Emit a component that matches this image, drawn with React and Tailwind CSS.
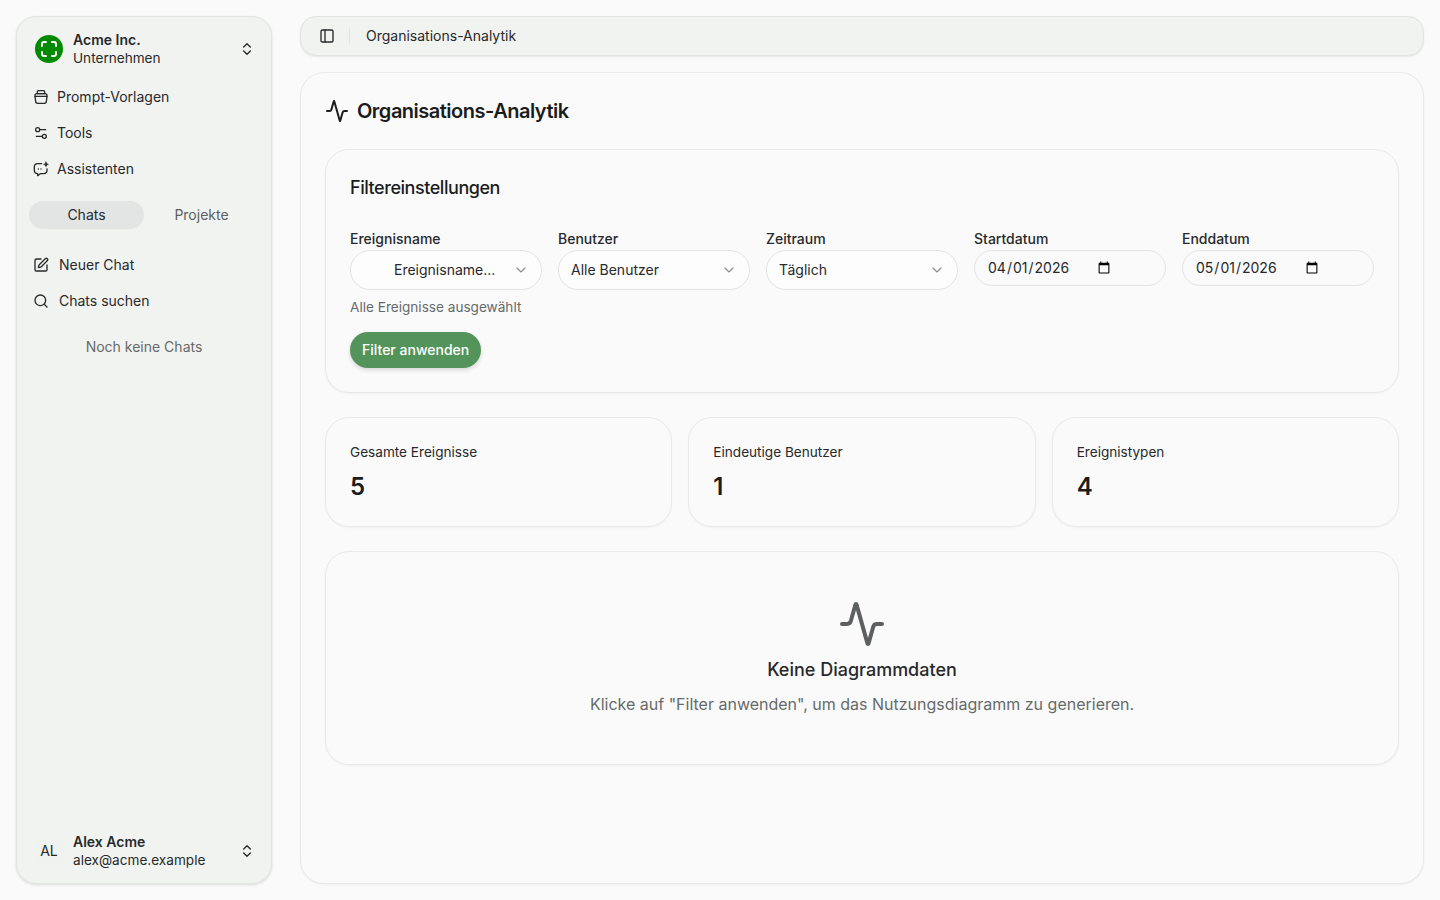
import React from "react";
import { Activity, ChevronDown, ChevronsUpDown, PanelLeft, Search, Settings2, SquarePen } from "lucide-react";

function PotIcon() {
  return (
    <svg width="16" height="16" viewBox="0 0 24 24" fill="none" stroke="currentColor" strokeWidth="2" strokeLinecap="round" strokeLinejoin="round" className="shrink-0">
      <path d="M8 2.5h8a1.5 1.5 0 0 1 1.5 1.5v3h-11V4A1.5 1.5 0 0 1 8 2.5Z" />
      <path d="M6 7h12a3 3 0 0 1 3 3v1l-1 7.5a3 3 0 0 1-3 3H7a3 3 0 0 1-3-3L3 11v-1a3 3 0 0 1 3-3Z" />
      <path d="M3 11h18" />
    </svg>
  );
}

function AssistantIcon() {
  return (
    <svg width="16" height="16" viewBox="0 0 24 24" fill="none" stroke="currentColor" strokeWidth="2" strokeLinecap="round" strokeLinejoin="round" className="shrink-0">
      <path d="M13 4H7a5 5 0 0 0-5 5v5a5 5 0 0 0 5 5v3l4-3h5a5 5 0 0 0 5-5v-2" />
      <path d="M19.5 1.5 20.6 4 23 5l-2.4 1-1.1 2.5L18.4 6 16 5l2.4-1Z" fill="currentColor" strokeWidth="1" />
      <path d="M8 12h.01M12 12h.01" />
    </svg>
  );
}

function LogoIcon() {
  return (
    <div className="flex h-7 w-7 shrink-0 items-center justify-center rounded-full bg-[#008a00]">
      <svg width="20" height="20" viewBox="0 0 20 20" fill="none" stroke="#ffffff" strokeWidth="2" strokeLinecap="round" strokeLinejoin="round">
        <path d="M3 7V5a2 2 0 0 1 2-2h2" />
        <path d="M13 3h2a2 2 0 0 1 2 2v2" />
        <path d="M17 13v2a2 2 0 0 1-2 2h-2" />
        <path d="M7 17H5a2 2 0 0 1-2-2v-2" />
      </svg>
    </div>
  );
}

function NavRow({ icon, label, gap = "gap-2" }) {
  return (
    <div className={`flex h-9 items-center ${gap} px-2 text-sm text-[#27292a]`}>
      {icon}
      <span>{label}</span>
    </div>
  );
}

function Sidebar() {
  return (
    <aside className="flex h-[868px] w-64 shrink-0 flex-col rounded-[20px] border border-[#e2e4e2] bg-[#f1f3f1] px-2 shadow-[0_1px_3px_rgba(0,0,0,0.12)]">
      <div className="flex items-center gap-2.5 pl-[10px] pr-2 pt-[14px]">
        <LogoIcon />
        <div className="min-w-0 flex-1 text-[#27292a]">
          <div className="text-sm font-semibold leading-[18px]">Acme Inc.</div>
          <div className="text-[13.6px] leading-[18px]">Unternehmen</div>
        </div>
        <ChevronsUpDown size={16} strokeWidth={2} className="text-[#27292a]" />
      </div>
      <nav className="mt-[12px] flex flex-col">
        <NavRow icon={<PotIcon />} label="Prompt-Vorlagen" />
        <NavRow icon={<Settings2 size={16} strokeWidth={2} />} label="Tools" />
        <NavRow icon={<AssistantIcon />} label="Assistenten" />
      </nav>
      <div className="mt-[14px] grid grid-cols-2 px-[4px] text-sm">
        <div className="flex h-7 items-center justify-center rounded-full bg-[#e3e5e4] text-[#27292a]">Chats</div>
        <div className="flex h-7 items-center justify-center text-[#5c6060]">Projekte</div>
      </div>
      <div className="mt-[18px] flex flex-col">
        <NavRow icon={<SquarePen size={16} strokeWidth={2} />} label="Neuer Chat" gap="gap-2.5" />
        <NavRow icon={<Search size={16} strokeWidth={2} />} label="Chats suchen" gap="gap-2.5" />
      </div>
      <div className="mt-[18px] text-center text-sm leading-5 text-[#666a6a]">Noch keine Chats</div>
      <div className="mt-auto flex items-center gap-2 px-2 pb-[14px]">
        <div className="flex h-8 w-8 shrink-0 items-center justify-center rounded-full bg-[#f0f2f0] text-sm text-[#27292a]">AL</div>
        <div className="min-w-0 flex-1 text-[#27292a]">
          <div className="text-sm font-semibold leading-[18px]">Alex Acme</div>
          <div className="text-[13.6px] leading-[18px]">alex@acme.example</div>
        </div>
        <ChevronsUpDown size={16} strokeWidth={2} className="text-[#27292a]" />
      </div>
    </aside>
  );
}

function SelectBox({ children, className = "" }) {
  return (
    <div className={`flex h-10 items-center justify-between rounded-[20px] border border-[#e2e4e2] bg-[#fdfdfd] pr-3 text-sm text-[#27292a] ${className}`}>
      {children}
      <ChevronDown size={16} strokeWidth={1.75} className="text-[#8a8d8d]" />
    </div>
  );
}

function Field({ label, children }) {
  return (
    <div className="flex flex-col">
      <label className="text-sm font-medium leading-5 text-[#27292a]">{label}</label>
      {children}
    </div>
  );
}

function DateInput({ value }) {
  return (
    <div className="mt-[1px] flex h-9 w-full items-center rounded-[18px] border border-[#e2e4e2] px-3">
      <input
        type="date"
        defaultValue={value}
        className="bg-transparent text-sm text-[#27292a] outline-none"
      />
    </div>
  );
}

function Stat({ label, value }) {
  return (
    <div className="flex h-[110px] flex-col rounded-[24px] border border-[#e8eae8] bg-[#fafafa] px-6 pt-[24px] shadow-[0_1px_2px_rgba(0,0,0,0.04)]">
      <div className="text-[13.6px] leading-5 text-[#27292a]">{label}</div>
      <div className="mt-[9px] text-2xl font-semibold leading-8 text-[#1b1d1d]">{value}</div>
    </div>
  );
}

export default function App() {
  return (
    <div className="flex h-[900px] w-[1440px] gap-7 overflow-hidden bg-[#fafafa] p-4 font-['Inter',sans-serif] antialiased">
      <Sidebar />
      <main className="flex min-w-0 flex-1 flex-col gap-4">
        <header className="flex h-10 shrink-0 items-center rounded-[16px] border border-[#e2e4e2] bg-[#f1f3f1] pl-[18px] text-sm text-[#27292a] shadow-[0_1px_2px_rgba(0,0,0,0.08)]">
          <PanelLeft size={16} strokeWidth={2} />
          <div className="ml-[14px] mr-[16px] h-4 w-px bg-[#e2e4e2]" />
          <span>Organisations-Analytik</span>
        </header>
        <section className="flex h-[812px] flex-col rounded-[24px] border border-[#e8eae8] bg-[#fafafa] px-6 pt-6 shadow-[0_1px_2px_rgba(0,0,0,0.05)]">
          <h1 className="flex h-[28px] items-center gap-2 text-xl font-semibold tracking-[-0.025em] text-[#1b1d1d]">
            <Activity size={24} strokeWidth={2} />
            Organisations-Analytik
          </h1>
          <div className="mt-6 h-[244px] rounded-[24px] border border-[#e8eae8] bg-[#fafafa] px-6 pt-6 shadow-[0_1px_2px_rgba(0,0,0,0.04)]">
            <h2 className="text-lg font-medium leading-7 tracking-[-0.025em] text-[#1b1d1d]">Filtereinstellungen</h2>
            <div className="mt-[27px] grid grid-cols-5 items-start gap-4">
              <Field label="Ereignisname">
                <SelectBox className="pl-[43px] mt-[1px]">Ereignisname...</SelectBox>
                <p className="mt-[7px] text-[13.6px] leading-5 text-[#666a6a]">Alle Ereignisse ausgewählt</p>
              </Field>
              <Field label="Benutzer">
                <SelectBox className="pl-3 mt-[1px]">Alle Benutzer</SelectBox>
              </Field>
              <Field label="Zeitraum">
                <SelectBox className="pl-3 mt-[1px]">Täglich</SelectBox>
              </Field>
              <Field label="Startdatum">
                <DateInput value="2026-04-01" />
              </Field>
              <Field label="Enddatum">
                <DateInput value="2026-05-01" />
              </Field>
            </div>
            <button className="mt-[15px] h-9 rounded-full bg-[#52945a] px-3 text-sm font-medium text-white shadow-[0_2px_4px_rgba(0,0,0,0.15)]">Filter anwenden</button>
          </div>
          <div className="mt-6 grid grid-cols-3 gap-4">
            <Stat label="Gesamte Ereignisse" value="5" />
            <Stat label="Eindeutige Benutzer" value="1" />
            <Stat label="Ereignistypen" value="4" />
          </div>
          <div className="mt-6 flex h-[214px] flex-col items-center rounded-[24px] border border-[#e8eae8] bg-[#fafafa] pt-[48px] shadow-[0_1px_2px_rgba(0,0,0,0.04)]">
            <Activity size={48} strokeWidth={2} className="text-[#5c6060]" />
            <div className="mt-[8px] text-lg font-medium leading-7 text-[#27292a]">Keine Diagrammdaten</div>
            <div className="mt-[8px] text-base leading-6 text-[#666a6a]">Klicke auf "Filter anwenden", um das Nutzungsdiagramm zu generieren.</div>
          </div>
        </section>
      </main>
    </div>
  );
}
